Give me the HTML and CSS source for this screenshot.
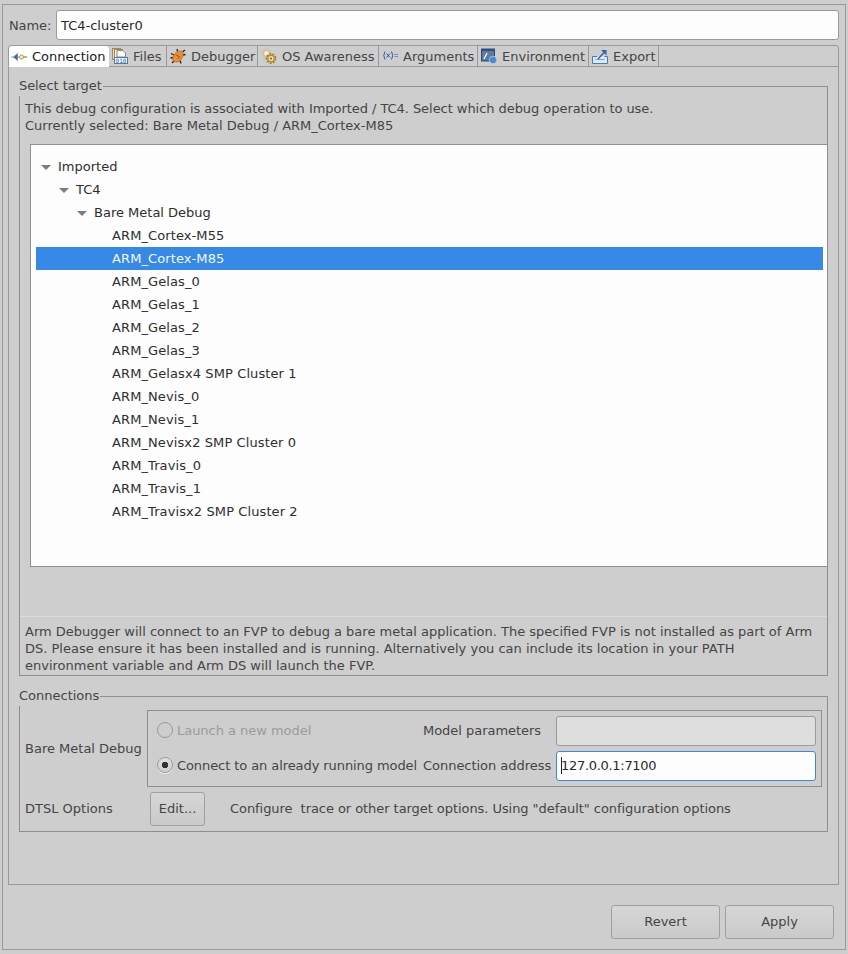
FILE: index.html
```html
<!DOCTYPE html>
<html lang="en">
<head>
<meta charset="utf-8">
<title>Debug configuration</title>
<link rel="stylesheet" href="styles.css">
</head>
<body>
<div class="window">
  <div class="name-row">
    <span class="name-label">Name:</span>
    <div class="field name-field">TC4-cluster0</div>
  </div>
  <div class="tabs">
    <div class="tab active">
      <svg class="icon" viewBox="0 0 16 16"><path d="M0 8 L3 8" stroke="#8aa3cf"/><path d="M6.500 4.500 L6.500 11.500 L2.500 8 Z" fill="#3d62b5" stroke="#3d62b5" stroke-width=".5"/><path d="M6.500 8 L8 8" stroke="#9a9a9a"/><circle cx="10.500" cy="8" r="2" fill="#fbf2c8" stroke="#b8932a"/><path d="M12.500 8 L16 8" stroke="#b8932a" stroke-width="1.400"/></svg>
      <span>Connection</span>
    </div>
    <div class="tab">
      <svg class="icon" viewBox="0 0 16 16"><rect x=".5" y=".5" width="8" height="11" fill="#efe0b4" stroke="#a08a55"/><rect x="2.500" y="1.500" width="8" height="11" fill="#f8efd4" stroke="#a08a55"/><path d="M5 2.500 L11 2.500 L13.500 5 L13.500 9 L5 9 Z" fill="#fdfaf0" stroke="#8a8a8a"/><rect x="2.500" y="9.500" width="13" height="6" fill="#fff" stroke="#4a78b8"/><text x="9" y="15" class="bits">010</text></svg>
      <span>Files</span>
    </div>
    <div class="tab">
      <svg class="icon" viewBox="0 0 16 16"><path d="M1 5.500 L4 7 M0.500 10 L3.500 9.500 M2 15 L4.500 12.500 M15 2 L12.500 4 M15.500 6.500 L13 7 M11 15.500 L10 12.500 M7 1 L7.500 3.500" stroke="#222" stroke-width="1.300" fill="none"/><path d="M3 12.500 C1.500 7.500 6.500 2 12.500 3 C14 6 13 10 10 13 C7.500 14.500 4.500 14.500 3 12.500 Z" fill="#ec8f33" stroke="#a85a14" stroke-width=".6"/><path d="M5.500 6.500 L9 8.500 M7.500 11 L10 8" stroke="#8a4a12" stroke-width=".8"/></svg>
      <span>Debugger</span>
    </div>
    <div class="tab">
      <svg class="icon" viewBox="0 0 16 16"><circle cx="5.500" cy="5.500" r="3" fill="#f7efd8" stroke="#cdbb92" stroke-width="1.200"/><circle cx="5.500" cy="5.500" r="4.600" fill="none" stroke="#d3c199" stroke-width="1.500" stroke-dasharray="1.600 1.400"/><circle cx="10" cy="10.500" r="3.200" fill="#f7ecc6" stroke="#b08a34" stroke-width="1.400"/><circle cx="10" cy="10.500" r="4.700" fill="none" stroke="#a67c24" stroke-width="1.500" stroke-dasharray="1.800 1.500"/><circle cx="10" cy="10.500" r="1.200" fill="#9a7a30"/></svg>
      <span>OS Awareness</span>
    </div>
    <div class="tab">
      <svg class="icon" viewBox="0 0 16 16"><path d="M3 3.500 Q0.500 7.500 3 11.500 M9.500 3.500 Q12 7.500 9.500 11.500" fill="none" stroke="#2f5aa8"/><path d="M4.500 5.500 L8 9.500 M8 5.500 L4.500 9.500" stroke="#2f5aa8"/><path d="M12.500 6.500 L16 6.500 M12.500 8.500 L16 8.500" stroke="#6f8fc4"/></svg>
      <span>Arguments</span>
    </div>
    <div class="tab">
      <svg class="icon" viewBox="0 0 16 16"><rect x=".5" y="1" width="13" height="12" fill="#5a7ba6" stroke="#33496b"/><rect x="1" y="1" width="12" height="2" fill="#2d4f86"/><path d="M3 11 L6 5" stroke="#fff" stroke-width="1.200"/><circle cx="12" cy="12" r="3.800" fill="#4a8ad0" stroke="#d9e6f4" stroke-width=".6"/></svg>
      <span>Environment</span>
    </div>
    <div class="tab">
      <svg class="icon" viewBox="0 0 16 16"><path d="M5 8.500 L.5 8.500 L.5 15.500 L15.500 15.500 L15.500 8.500 L12.500 8.500" fill="#dce8f5" stroke="#4a7ab8"/><path d="M3.500 11.500 L12.500 11.500" stroke="#7ea3d0"/><path d="M6 11 L12 4.500" stroke="#2f62a8" stroke-width="1.400"/><path d="M9 2 L14.500 2 L14.500 7.500 Z" fill="#2f62a8"/></svg>
      <span>Export</span>
    </div>
  </div>
  <div class="panel">
    <fieldset class="group target">
      <legend>Select target</legend>
      <p class="intro tight">This debug configuration is associated with Imported / TC4. Select which debug operation to use.</p>
      <p class="intro">Currently selected: Bare Metal Debug / ARM_Cortex-M85</p>
      <div class="tree">
        <div class="row l0"><i class="arrow"></i>Imported</div>
        <div class="row l1"><i class="arrow"></i>TC4</div>
        <div class="row l2"><i class="arrow"></i>Bare Metal Debug</div>
        <div class="row l3">ARM_Cortex-M55</div>
        <div class="row l3 selected">ARM_Cortex-M85</div>
        <div class="row l3">ARM_Gelas_0</div>
        <div class="row l3">ARM_Gelas_1</div>
        <div class="row l3">ARM_Gelas_2</div>
        <div class="row l3">ARM_Gelas_3</div>
        <div class="row l3">ARM_Gelasx4 SMP Cluster 1</div>
        <div class="row l3">ARM_Nevis_0</div>
        <div class="row l3">ARM_Nevis_1</div>
        <div class="row l3">ARM_Nevisx2 SMP Cluster 0</div>
        <div class="row l3">ARM_Travis_0</div>
        <div class="row l3">ARM_Travis_1</div>
        <div class="row l3">ARM_Travisx2 SMP Cluster 2</div>
      </div>
      <p class="description">Arm Debugger will connect to an FVP to debug a bare metal application. The specified FVP is not installed as part of Arm DS. Please ensure it has been installed and is running. Alternatively you can include its location in your PATH environment variable and Arm DS will launch the FVP.</p>
    </fieldset>
    <fieldset class="group connections">
      <legend>Connections</legend>
      <div class="conn-row">
        <span class="conn-label">Bare Metal Debug</span>
        <div class="model-box">
          <label class="radio-label disabled"><i class="radio"></i>Launch a new model</label>
          <span class="field-label">Model parameters</span>
          <div class="field param-field off"></div>
          <label class="radio-label"><i class="radio on"></i>Connect to an already running model</label>
          <span class="field-label">Connection address</span>
          <div class="field param-field focus"><i class="caret"></i><span class="address">127.0.0.1:7100</span></div>
        </div>
      </div>
      <div class="conn-row dtsl">
        <span class="conn-label">DTSL Options</span>
        <div class="button edit">Edit...</div>
        <span class="dtsl-text">Configure&nbsp; trace or other target options. Using "default" configuration options</span>
      </div>
    </fieldset>
  </div>
  <div class="footer">
    <div class="button wide">Revert</div>
    <div class="button wide">Apply</div>
  </div>
</div>
</body>
</html>
```
FILE: styles.css
```css
* { box-sizing: border-box; }
html, body { margin: 0; padding: 0; }
body {
  width: 848px;
  height: 954px;
  overflow: hidden;
  background: #cecece;
  color: #454545;
  font: 13px/17px "DejaVu Sans", sans-serif;
  padding: 4px 2px 0;
}
.window {
  width: 844px;
  height: 946px;
  border: 1px solid #999;
  padding: 5px 6px 0 5px;
  display: flex;
  flex-direction: column;
}
.name-row { display: flex; align-items: center; }
.name-label { width: 48px; padding-left: 1px; letter-spacing: -.1px; }
.field {
  background: #fdfdfd;
  border: 1px solid #9a9a9a;
  border-radius: 3px;
  color: #2a2a2a;
  display: flex;
  align-items: center;
  padding-left: 4px;
}
.name-field { flex: 1; height: 30px; }
.tabs {
  display: grid;
  grid-template-columns: 100px 58px 91px 121px 99px 111px 70px;
  height: 22px;
  margin-top: 5px;
  border: 1px solid #999;
  border-top-left-radius: 3px;
  border-top-right-radius: 3px;
}
.tab {
  display: flex;
  align-items: center;
  height: 20px;
  padding-left: 3px;
  gap: 5px;
  border-right: 1px solid #999;
  white-space: nowrap;
}
.tab.active {
  background: #fff;
  color: #1a1a1a;
  height: 21px;
  padding-left: 2px;
  border-right: 0;
  border-top-left-radius: 3px;
  border-top-right-radius: 3px;
}
.icon { width: 16px; height: 16px; flex: none; }
.bits { font: 6px "DejaVu Sans Mono", monospace; fill: #2f5aa8; text-anchor: middle; }
.panel {
  height: 818px;
  border: 1px solid #999;
  border-top: 0;
  padding: 10px 10px 0;
}
.group {
  margin: 0;
  border: 1px solid #8f8f8f;
  min-width: 0;
  padding: 0;
}
.group legend {
  padding: 0 1px 2px 0;
  margin-left: -6px;
  line-height: 17px;
}
.target { height: 599px; padding: 4px 0 0 5px; }
.target legend { letter-spacing: -.08px; }
.intro { margin: 0; }
.tight { letter-spacing: -.05px; }
.tree {
  margin: 10px 0 0 5px;
  height: 423px;
  background: #fdfdfd;
  border: 1px solid #8f8f8f;
  border-right: 0;
  padding: 10px 4px 0 5px;
  color: #2e2e2e;
}
.row {
  height: 23px;
  line-height: 23px;
  position: relative;
  white-space: nowrap;
}
.l0 { padding-left: 22px; }
.l1 { padding-left: 40px; }
.l2 { padding-left: 58px; }
.l3 { padding-left: 76px; letter-spacing: .1px; }
.selected { background: #3689e6; color: #f4f8fd; }
.arrow {
  position: absolute;
  top: 10px;
  width: 0;
  height: 0;
  border-left: 5px solid transparent;
  border-right: 5px solid transparent;
  border-top: 5px solid #7c7c7c;
  margin-left: -17px;
}
.description {
  margin: 49px 0 0 -5px;
  border-top: 1px solid #dcdcdc;
  padding: 6px 14px 0 5px;
}
.connections { margin-top: 11px; height: 145px; padding: 4px 5px 0 5px; }
.conn-row { display: flex; align-items: center; }
.conn-label { width: 122px; flex: none; }
.model-box {
  flex: 1;
  height: 77px;
  border: 1px solid #8f8f8f;
  padding: 5px 5px 0 9px;
  display: grid;
  grid-template-columns: 266px 133px 1fr;
  grid-template-rows: 30px 30px;
  row-gap: 5px;
  align-items: start;
}
.radio-label, .field-label { height: 28px; display: flex; align-items: center; }
.radio-label { gap: 4px; letter-spacing: -.08px; }
.radio-label.disabled { color: #9b9b9b; letter-spacing: -.03px; }
.field-label { letter-spacing: -.03px; }
.radio {
  width: 16px;
  height: 16px;
  border: 1px solid #9b9b9b;
  border-radius: 50%;
  flex: none;
}
.radio.on {
  background: radial-gradient(circle, #333 0 3px, transparent 3.5px), linear-gradient(#e0e0e0, #cfcfcf);
  box-shadow: 0 1px 0 #eee;
}
.param-field { height: 30px; padding-bottom: 2px; }
.param-field.off { background: #dedede; }
.param-field.focus { border-color: #3689e6; position: relative; }
.address { letter-spacing: -.3px; }
.caret {
  position: absolute;
  left: 4px;
  top: 5px;
  width: 1px;
  height: 17px;
  background: #222;
}
.dtsl { margin-top: 5px; }
.dtsl .conn-label { width: 125px; margin-bottom: 2px; }
.button {
  height: 34px;
  padding-bottom: 2px;
  border: 1px solid #a0a0a0;
  border-radius: 3px;
  background: linear-gradient(#d6d6d6, #cacaca);
  display: flex;
  align-items: center;
  justify-content: center;
}
.edit { width: 55px; flex: none; }
.dtsl-text { margin: 0 0 2px 25px; white-space: nowrap; letter-spacing: -.06px; }
.footer {
  display: flex;
  justify-content: flex-end;
  gap: 5px;
  padding: 20px 5px 0 0;
}
.wide { width: 109px; }
```
